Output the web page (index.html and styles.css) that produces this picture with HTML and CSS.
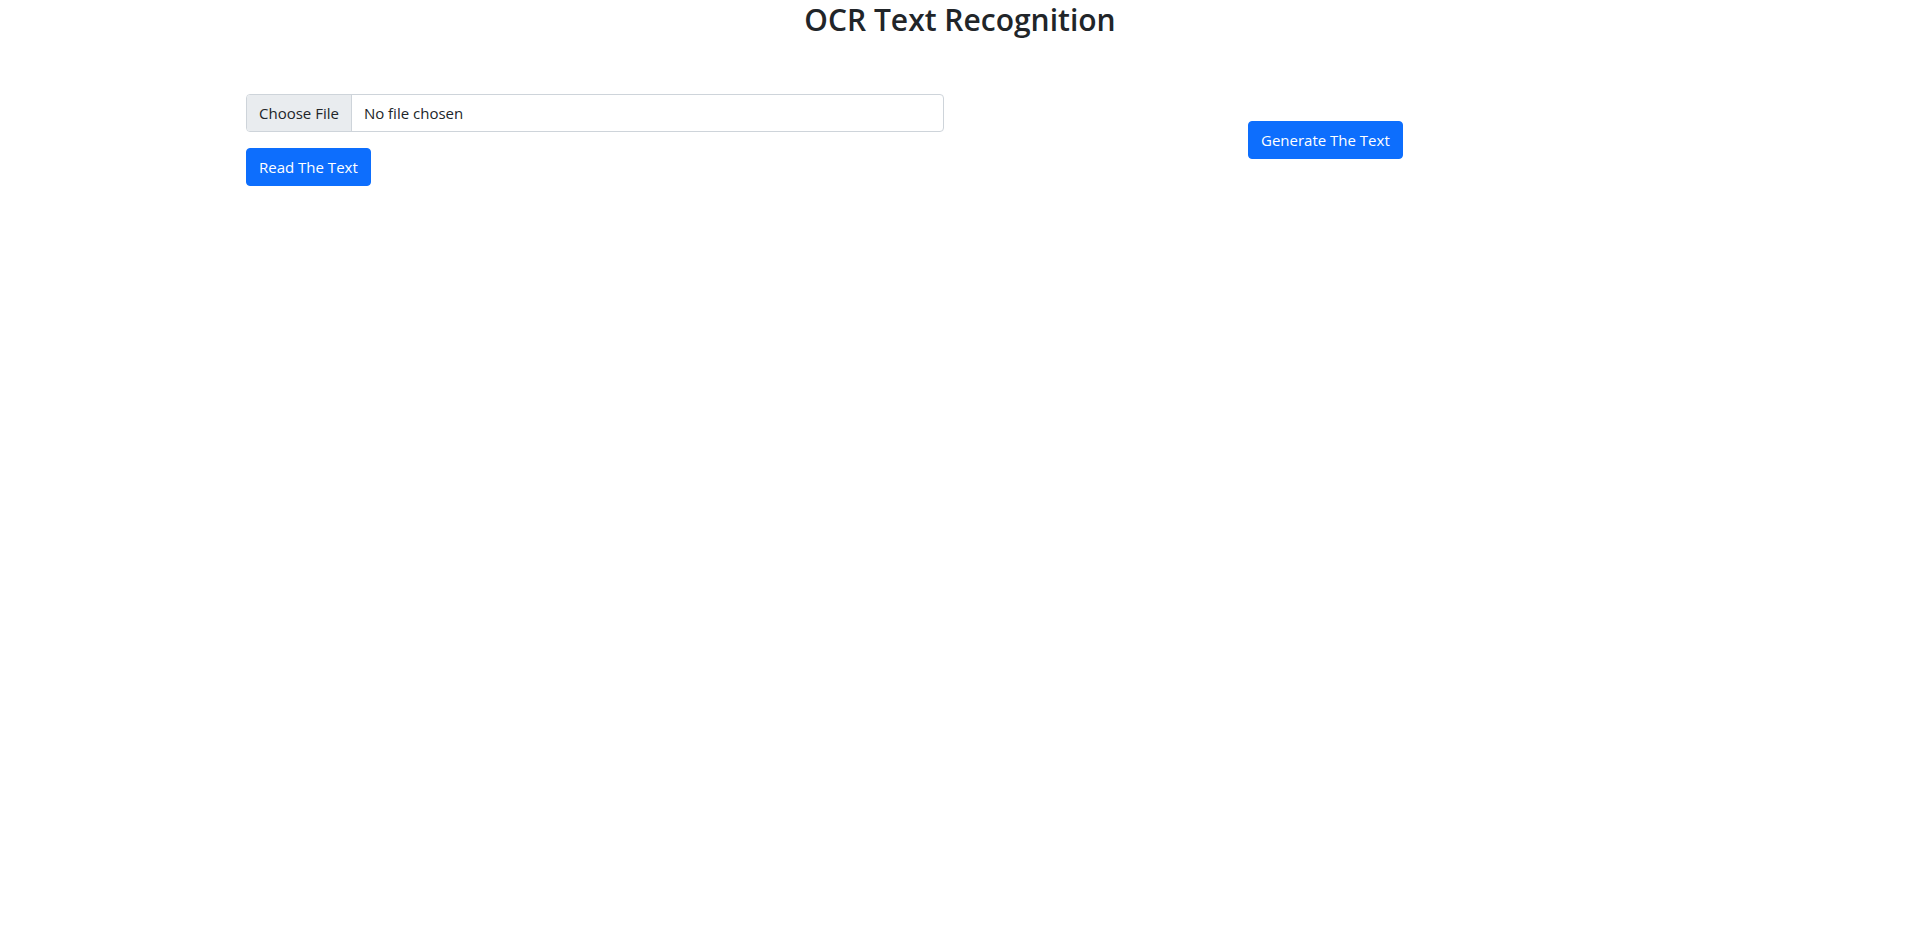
FILE: index.html
```html
<!DOCTYPE html>
<html lang="en">
<head>
<meta charset="utf-8">
<title>OCR Text Recognition</title>
<link rel="stylesheet" href="styles.css">
</head>
<body>
<h2 class="title">OCR Text Recognition</h2>
<div class="row">
  <div class="left-col">
    <div class="file-input">
      <span class="file-btn">Choose File</span>
      <span class="file-name">No file chosen</span>
    </div>
    <button class="btn" type="button">Read The Text</button>
  </div>
  <div class="right-col">
    <button class="btn" type="button">Generate The Text</button>
  </div>
</div>
</body>
</html>
```

FILE: styles.css
```css
* { box-sizing: border-box; }
html, body { margin: 0; padding: 0; background: #fff; }
body {
  font-family: "Open Sans", "Liberation Sans", sans-serif;
  font-size: 15px;
  color: #212529;
}
.title {
  margin: 0 0 8px;
  font-size: 30px;
  line-height: 40px;
  font-weight: 600;
  text-align: center;
  color: #212529;
}
.row {
  display: flex;
  align-items: center;
  margin-top: 46px;
  padding-top: 8px;
  padding-left: 246px;
}
.left-col {
  width: 698px;
  display: flex;
  flex-direction: column;
  align-items: flex-start;
  gap: 16px;
}
.right-col {
  margin-left: 304px;
}
.file-input {
  width: 698px;
  height: 38px;
  display: flex;
  align-items: stretch;
  border: 1px solid #ced4da;
  border-radius: 4px;
  overflow: hidden;
  line-height: 36px;
}
.file-btn {
  background: #e9ecef;
  padding: 0 12px;
  border-right: 1px solid #ced4da;
  color: #212529;
}
.file-name {
  padding: 0 12px;
  color: #212529;
}
.btn {
  font-family: inherit;
  font-size: 15px;
  line-height: 24px;
  height: 38px;
  padding: 6px 12px;
  color: #fff;
  background: #0d6efd;
  border: 1px solid #0d6efd;
  border-radius: 4px;
  cursor: pointer;
}
```
